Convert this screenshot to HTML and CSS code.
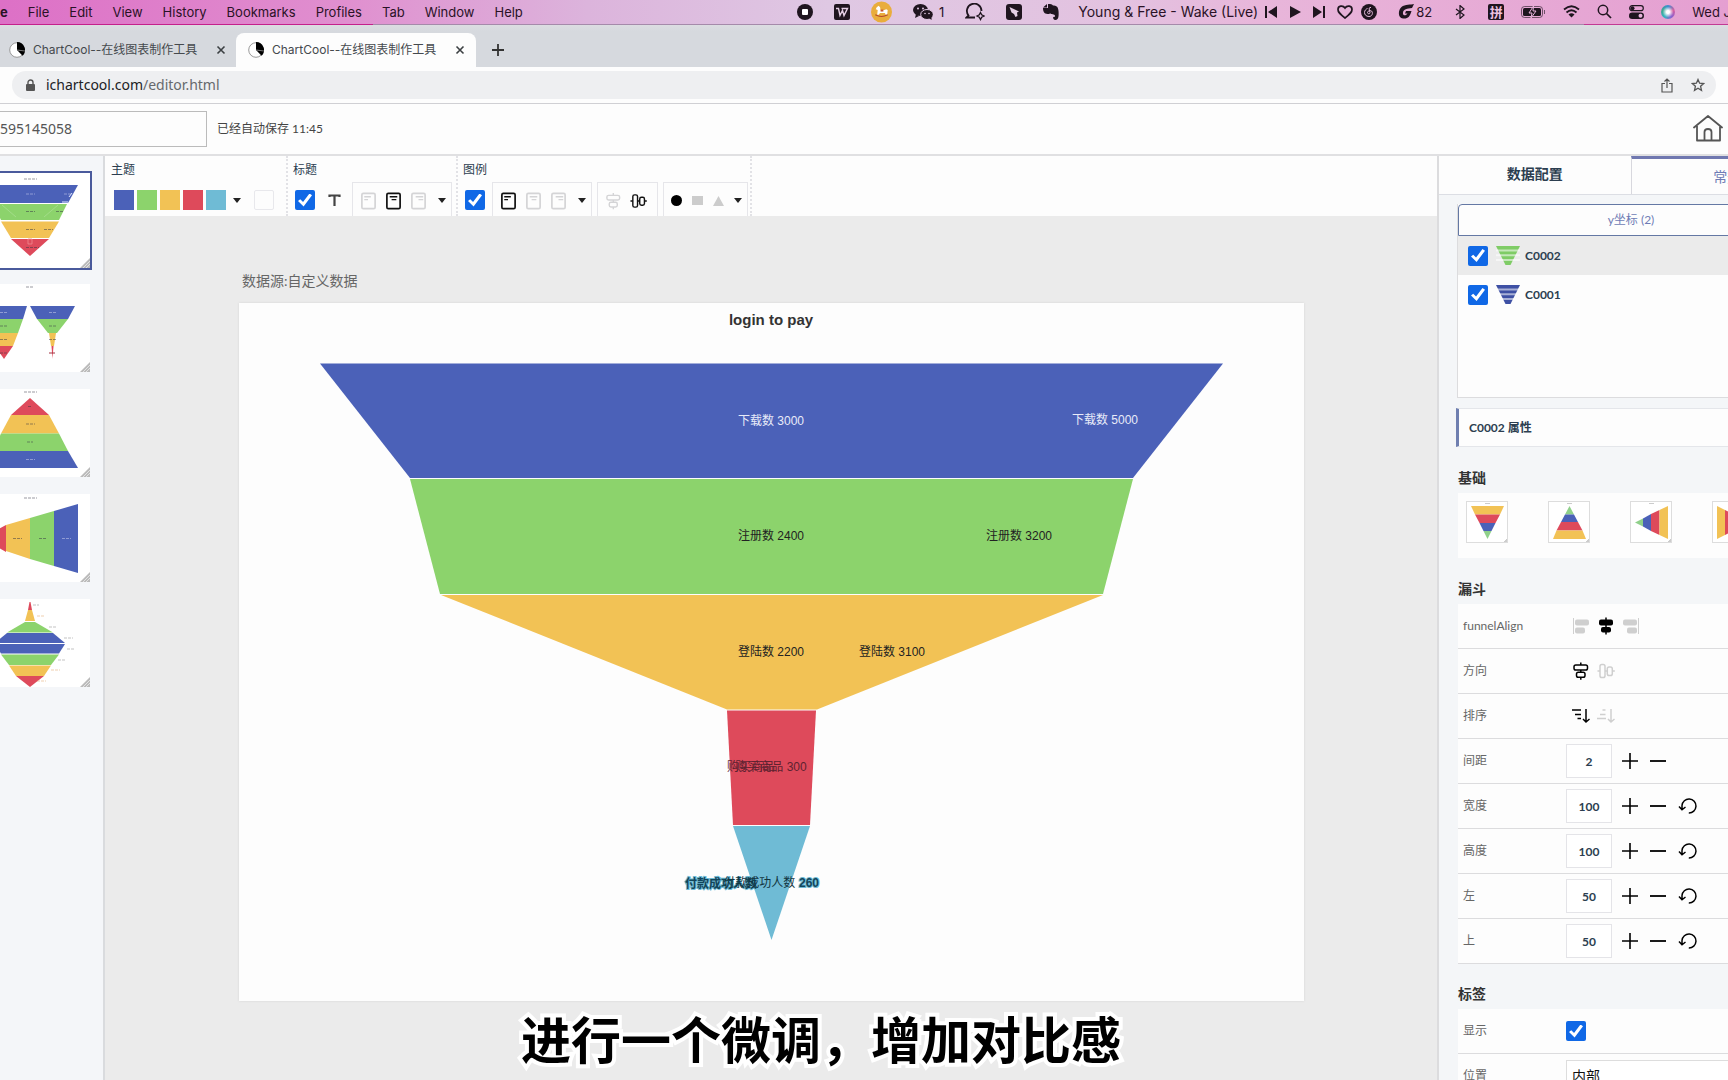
FILE: index.html
```html
<!DOCTYPE html>
<html lang="zh-CN">
<head>
<meta charset="utf-8">
<title>ChartCool--在线图表制作工具</title>
<link rel="stylesheet" href="styles.css">
</head>
<body>
<svg class="defs" aria-hidden="true">
  <symbol id="i-pie" viewBox="0 0 16 16"><circle cx="8" cy="8" r="7.3" fill="#fff" stroke="#999" stroke-width="1"/><path d="M8 0a8 8 0 0 1 5.600 13.700L8 8z" fill="#000"/><path d="M8 8l8 1" stroke="#777"/></symbol>
  <symbol id="i-close" viewBox="0 0 10 10"><path d="M1.500 1.500l7 7M8.500 1.500l-7 7" stroke="#3c4043" stroke-width="1.600"/></symbol>
  <symbol id="i-pos-l" viewBox="0 0 18 20"><rect x="2" y="2" width="14" height="16" rx="1.500" fill="none" stroke="currentColor" stroke-width="1.800"/><path d="M4.500 5.500h7M4.500 8.500h4" stroke="currentColor" stroke-width="1.400"/></symbol>
  <symbol id="i-pos-c" viewBox="0 0 18 20"><rect x="2" y="2" width="14" height="16" rx="1.500" fill="none" stroke="currentColor" stroke-width="1.800"/><path d="M5 5.500h8M7 8.500h5" stroke="currentColor" stroke-width="1.400"/></symbol>
  <symbol id="i-pos-r" viewBox="0 0 18 20"><rect x="2" y="2" width="14" height="16" rx="1.500" fill="none" stroke="currentColor" stroke-width="1.800"/><path d="M6 5.500h8M9 8.500h5" stroke="currentColor" stroke-width="1.400"/></symbol>
  <symbol id="i-vert" viewBox="0 0 18 18"><g fill="none" stroke="currentColor" stroke-width="1.500"><rect x="2" y="3" width="13.500" height="5" rx="1.800"/><rect x="4.500" y="10.300" width="8.500" height="5" rx="1.800"/><path d="M8.800 0.500v2.500M8.800 8v2.300M8.800 15.300v2.500"/></g></symbol>
  <symbol id="i-horz" viewBox="0 0 18 18"><g fill="none" stroke="currentColor" stroke-width="1.500"><rect x="3" y="2.500" width="5" height="13" rx="1.800"/><rect x="10.300" y="5" width="5" height="8.500" rx="1.800"/><path d="M0.500 9h2.500M8 9h2.300M15.300 9h2.500"/></g></symbol>
  <symbol id="i-al-l" viewBox="0 0 18 18"><path d="M1.500 1v16" stroke="currentColor"/><rect x="3" y="2.500" width="14" height="6" rx="2" fill="currentColor"/><rect x="3" y="10.500" width="10" height="6" rx="2" fill="currentColor"/></symbol>
  <symbol id="i-al-c" viewBox="0 0 18 18"><path d="M9 0.500v17" stroke="currentColor" stroke-width="1.500"/><rect x="2" y="2.500" width="14" height="6" rx="2" fill="currentColor"/><rect x="4" y="10" width="10" height="5.500" rx="2" fill="currentColor"/></symbol>
  <symbol id="i-al-r" viewBox="0 0 18 18"><path d="M16.500 1v16" stroke="currentColor"/><rect x="1" y="2.500" width="14" height="6" rx="2" fill="currentColor"/><rect x="5" y="10.500" width="10" height="6" rx="2" fill="currentColor"/></symbol>
  <symbol id="i-desc" viewBox="0 0 18 18"><path d="M0 3h9M3 7.500h6M5.500 11.500h3.500M14 2v13M11 12l3 3 3.500-3" fill="none" stroke="currentColor" stroke-width="1.500"/></symbol>
  <symbol id="i-asc" viewBox="0 0 18 18"><path d="M5.500 3h3M3 7.500h5.500M0 11.500h9M14 2v13M11 12l3 3 3.500-3" fill="none" stroke="currentColor" stroke-width="1.500"/></symbol>
  <symbol id="i-plus" viewBox="0 0 16 16"><path d="M0 8h16M8 0v16" stroke="currentColor" stroke-width="1.600"/></symbol>
  <symbol id="i-minus" viewBox="0 0 16 16"><path d="M0 8h16" stroke="currentColor" stroke-width="1.800"/></symbol>
  <symbol id="i-reset" viewBox="0 0 20 18"><path d="M4 12V8.500a7 7 0 1 1 6.800 7.500M1 9.500l3 3.300 3.500-2.800" fill="none" stroke="currentColor" stroke-width="1.500"/></symbol>
  <symbol id="i-funnel" viewBox="0 0 24 20"><path d="M0 0h24L14.500 19h-5z" fill="currentColor"/><path d="M0 4.500h24M0 9.300h24M0 14h24" stroke="#fff" stroke-opacity=".55" stroke-width="2"/></symbol>
  <symbol id="i-grip" viewBox="0 0 10 10"><path d="M10 0v10H0z" fill="#bbb"/><path d="M10 3l-7 7M10 6l-4 4" stroke="#eee" stroke-width=".8"/></symbol>
</svg>

<header class="menubar">
  <nav class="menus"><b>e</b><span>File</span><span>Edit</span><span>View</span><span>History</span><span>Bookmarks</span><span>Profiles</span><span>Tab</span><span>Window</span><span>Help</span></nav>
  <div class="tray">
    <svg width="16" height="16" viewBox="0 0 16 16"><circle cx="8" cy="8" r="8" fill="#1f151f"/><rect x="5" y="5" width="6" height="6" rx="1" fill="#fff"/></svg>
    <svg width="16" height="16" viewBox="0 0 16 16"><rect width="16" height="16" rx="2" fill="#1f151f"/><path d="M2 4.500h2.500l1.500 7 2.500-5 1.500 5 3.500-7h-6" fill="none" stroke="#e5cfe5" stroke-width="1.400"/></svg>
    <svg width="21" height="22" viewBox="0 0 22 22"><circle cx="11" cy="11" r="11" fill="#e9ad3c"/><path d="M5 8l1-2 2-1.500 1.500 1.500.5 3h4l2-1 1.500 1-.5 5h-1.500l-1-2H9.500l-1.500 2H6.500l.5-5z" fill="#fff"/><path d="M4.500 14q6.500 3.500 13 0" fill="none" stroke="#b5472a" stroke-width="1.200"/><path d="M10 8.500h3v2h-3z" fill="#c7552f"/></svg>
    <span class="pair"><svg width="20" height="16" viewBox="0 0 20 16"><ellipse cx="7.500" cy="6" rx="7.500" ry="6" fill="#1f151f"/><path d="M3 10l-1 4 4-2z" fill="#1f151f"/><ellipse cx="14" cy="10.500" rx="6.300" ry="5" fill="#1f151f" stroke="#dfc6e2"/><path d="M16 14l2.500 2v-3z" fill="#1f151f"/><g fill="#dfc6e2"><circle cx="5" cy="4.500" r="1"/><circle cx="10" cy="4.500" r="1"/><circle cx="12" cy="9.500" r=".8"/><circle cx="16" cy="9.500" r=".8"/></g></svg><span>1</span></span>
    <svg width="20" height="18" viewBox="0 0 20 18"><path d="M16.500 8A7.300 7.300 0 1 0 3.500 12.500L1.500 14.500H10" fill="none" stroke="#1f151f" stroke-width="1.800"/><path d="M15.500 9.500l1.200 2.300 2.300 1.200-2.300 1.200-1.200 2.300-1.200-2.300-2.300-1.200 2.300-1.200z" fill="none" stroke="#1f151f" stroke-width="1.300"/></svg>
    <svg width="16" height="16" viewBox="0 0 16 16"><rect width="16" height="16" rx="3" fill="#1f151f"/><path d="M3.500 3l9.500 4.500-2 1 .5 3.500-2 1-1.500-3-2.500-1.500z" fill="#e5cfe5"/></svg>
    <svg width="16" height="16" viewBox="0 0 16 16"><path d="M5 0v4H0C0 9 2 10 6 10c1 0 1-1 1-1 .5 2 5 .500 5 3 0 1.500-2 1.500-2 .500 0 2 .5 3.500 2.500 3.500 3 0 3.500-4 3-9S13 1.500 10 1.500C9 0 8 0 5 0zM4 0L0 3.500h4z" fill="#1f151f"/></svg>
    <div class="media">
      <span class="song">Young &amp; Free - Wake (Live)</span>
      <svg width="12" height="12" viewBox="0 0 12 12"><path d="M0 0h2v12H0zM12 0v12L3 6z" fill="#1f151f"/></svg>
      <svg width="12" height="12" viewBox="0 0 12 12"><path d="M1 0l11 6-11 6z" fill="#1f151f"/></svg>
      <svg width="12" height="12" viewBox="0 0 12 12"><path d="M10 0h2v12h-2zM0 0l9 6-9 6z" fill="#1f151f"/></svg>
      <svg width="16" height="14" viewBox="0 0 16 14"><path d="M8 13C3 9 1 7.500 1 4.500c0-4 5-4.500 7-1.500 2-3 7-2.500 7 1.500C15 7.500 13 9 8 13z" fill="none" stroke="#1f151f" stroke-width="1.700"/></svg>
      <svg width="16" height="16" viewBox="0 0 16 16"><circle cx="8" cy="8" r="8" fill="#1f151f"/><path d="M10 3.500c-2-.5-2 1-1.500 3l.5 2c0 2-2.500 1.500-2.500 0S9 6 10.500 7c2 2 .5 5.500-2.500 5.500S3.500 10.500 3.500 8.500 5 5 6.500 4.500" fill="none" stroke="#e5bcdc"/></svg>
    </div>
    <div class="status">
      <span class="pair tight"><svg width="16" height="15" viewBox="0 0 16 15"><path d="M16 0C13 1 7 0 3.500 3S-.500 14 5 14.500c5 .5 7-2 8.500-7.500H8L7 9.500h2.500C8 12 4.500 12 5 8.500S9 4.500 14 4z" fill="#1f151f"/></svg><span>82</span></span>
      <svg width="22" height="14" viewBox="0 0 22 14"><path d="M7 4l8 6-4 3.500V.500L15 4l-8 6" fill="none" stroke="#1f151f" stroke-width="1.200"/></svg>
      <span class="ime">拼</span>
      <svg width="25" height="12" viewBox="0 0 25 12"><rect x=".5" y=".5" width="21" height="11" rx="3" fill="none" stroke="#1f151f" stroke-opacity=".6"/><rect x="2" y="2" width="18" height="8" rx="1.500" fill="#1f151f"/><path d="M12.500 0L8 7h3l-1 5 5-7h-3z" fill="#1f151f" stroke="#e8b4dc"/><path d="M23.500 4v4" stroke="#1f151f" stroke-opacity=".6"/></svg>
      <svg width="17" height="13" viewBox="0 0 17 13"><g fill="none" stroke="#1f151f"><path d="M1 4.500Q8.500-2 16 4.500" stroke-width="1.800"/><path d="M3.500 7.500Q8.500 3 13.500 7.500" stroke-width="1.800"/></g><path d="M5.500 9.500Q8.500 7 11.500 9.500L8.500 12.500z" fill="#1f151f"/></svg>
      <svg width="15" height="15" viewBox="0 0 15 15"><circle cx="6" cy="6" r="4.700" fill="none" stroke="#1f151f" stroke-width="1.500"/><path d="M9.500 9.500l4.500 4.500" stroke="#1f151f" stroke-width="1.700"/></svg>
      <svg width="15" height="14" viewBox="0 0 15 14"><rect x=".7" y=".7" width="13.600" height="5" rx="2.500" fill="none" stroke="#1f151f" stroke-width="1.200"/><circle cx="3.500" cy="3.200" r="2" fill="#1f151f"/><rect y="7.500" width="15" height="6.500" rx="3.200" fill="#1f151f"/><circle cx="11.500" cy="10.700" r="2" fill="#e8b4dc"/></svg>
      <span class="siri"></span>
      <span>Wed Jun</span>
    </div>
  </div>
</header>

<div class="tabs">
  <div class="tab"><svg width="16" height="16"><use href="#i-pie"/></svg><span>ChartCool--在线图表制作工具</span><button aria-label="关闭"><svg width="10" height="10"><use href="#i-close"/></svg></button></div>
  <div class="tab active"><svg width="16" height="16"><use href="#i-pie"/></svg><span>ChartCool--在线图表制作工具</span><button aria-label="关闭"><svg width="10" height="10"><use href="#i-close"/></svg></button></div>
  <button class="newtab" aria-label="新标签页"><svg width="12" height="12" viewBox="0 0 12 12"><path d="M0 6h12M6 0v12" stroke="#333" stroke-width="1.800"/></svg></button>
</div>
<div class="address">
  <div class="pill">
    <svg width="10" height="13" viewBox="0 0 10 13"><rect y="5" width="9" height="7" rx="1" fill="#555"/><path d="M2 5V3.500a2.500 2.500 0 0 1 5 0V5" fill="none" stroke="#555" stroke-width="1.400"/></svg>
    <span class="url">ichartcool.com<i>/editor.html</i></span>
    <svg width="12" height="15" viewBox="0 0 12 15"><path d="M4 5.500H1v8.500h10V5.500H8M6 10V1.500M3.500 3.500L6 1l2.500 2.500" fill="none" stroke="#555" stroke-width="1.200"/></svg>
    <svg width="14" height="14" viewBox="0 0 14 14"><path d="M7 1.500l1.600 3.700 4 .4-3 2.700.9 4L7 10.200l-3.500 2.100.9-4-3-2.700 4-.4z" fill="none" stroke="#555" stroke-width="1.300"/></svg>
  </div>
</div>

<div class="apphead">
  <input class="docname" type="text" value="595145058" aria-label="名称">
  <span class="saved">已经自动保存 11:45</span>
  <a class="home" href="#" aria-label="首页"><svg width="30" height="28" viewBox="0 0 30 28"><path d="M1 12.500L15 1l14 11.500M4 11v14.500h23V11M11.500 25V17q0-3 3.500-3t3.500 3v8" fill="none" stroke="#555" stroke-width="1.800" stroke-linejoin="round" stroke-linecap="round"/></svg></a>
</div>

<div class="work">
  <ul class="sheets">
    <li class="on"><svg viewBox="-30 173 120 95" width="120" height="95">
      <path d="M-18 185H78L68 203H-8z" fill="#4b61b8"/><path d="M-7 204H67L59 220H1z" fill="#8cd36c"/><path d="M1 221.500H59L49 238H11z" fill="#f2c255"/><path d="M11 239H49L30 256z" fill="#de4a5b"/>
      <g stroke="#334" stroke-opacity=".5" stroke-dasharray="3 1"><path d="M24 179h13"/><path d="M26 211.500h9M56 211.500h7M26 229.500h9M44 229.500h9M26 247.500h13"/></g><path d="M26 194h9M64 194h7" stroke="#8f9bd4" stroke-dasharray="3 1"/><path d="M69 197l3-4M62 202h6" stroke="#dfe6ff"/><path d="M2 205l14 12M58 205l-14 12" stroke="#a8de90" stroke-width=".8"/><path d="M28 239h4v5h-4z" fill="none" stroke="#f08a90" stroke-width=".8"/>
    </svg><svg class="grip" width="10" height="10"><use href="#i-grip"/></svg></li>
    <li><svg viewBox="-30 284 120 88" width="120" height="88">
      <path d="M-18 306H27L23 319H-14z" fill="#4b61b8"/><path d="M-14 319H23L18 333H-10z" fill="#8cd36c"/><path d="M-10 333H18L13 346H-5z" fill="#f2c255"/><path d="M-5 346H13L4 359z" fill="#de4a5b"/>
      <path d="M30 306H75L68 319H37z" fill="#4b61b8"/><path d="M37 319H68L57 333H48z" fill="#8cd36c"/><path d="M49 333H56L54 346H51z" fill="#f2c255"/><path d="M51.500 346H53.500L52.500 359z" fill="#de4a5b"/>
      <g stroke="#334" stroke-opacity=".5" stroke-dasharray="3 1"><path d="M26 287h8M0 326h8M49 326h8M0 339.500h8M49 339.500h8M0 353h8"/></g><path d="M49 353h6" stroke="#a03040"/><path d="M0 312.500h8M49 312.500h8" stroke="#8f9bd4" stroke-dasharray="3 1"/>
    </svg><svg class="grip" width="10" height="10"><use href="#i-grip"/></svg></li>
    <li><svg viewBox="-30 389 120 88" width="120" height="88">
      <path d="M30 398L49 415H11z" fill="#de4a5b"/><path d="M11 415H49L59 433.500H1z" fill="#f2c255"/><path d="M1 433.500H59L68 451H-8z" fill="#8cd36c"/><path d="M-8 451H68L78 468H-18z" fill="#4b61b8"/>
      <path d="M24 392h13M28 406.500h4M26 424h9M27 442h6" stroke="#334" stroke-opacity=".5" stroke-dasharray="3 1"/><path d="M26 459.500h9" stroke="#8f9bd4" stroke-dasharray="3 1"/>
    </svg><svg class="grip" width="10" height="10"><use href="#i-grip"/></svg></li>
    <li><svg viewBox="-30 494 120 88" width="120" height="88">
      <path d="M-18 538L6 525V552z" fill="#de4a5b"/><path d="M6 525L30 518V559L6 551z" fill="#f2c255"/><path d="M30 518L54 511V566L30 559z" fill="#8cd36c"/><path d="M54 511L78 504V573L54 566z" fill="#4b61b8"/>
      <path d="M24 498h13M13 538.500h9M39 538.500h7" stroke="#334" stroke-opacity=".5" stroke-dasharray="3 1"/><path d="M62 538.500h9" stroke="#8f9bd4" stroke-dasharray="3 1"/>
    </svg><svg class="grip" width="10" height="10"><use href="#i-grip"/></svg></li>
    <li><svg viewBox="-30 599 120 88" width="120" height="88">
      <path d="M29.500 602H30.500L32 610H28z" fill="#de4a5b"/><path d="M28 610H32L35 621H25z" fill="#f2c255"/><path d="M25 622H35L53 632.500H7z" fill="#8cd36c"/><path d="M7 633H53L65 643H-5z" fill="#4b61b8"/><path d="M-5 644H65L59 653.500H1z" fill="#4b61b8"/><path d="M1 654.500H59L51 665H9z" fill="#8cd36c"/><path d="M9 665.500H51L44 676H16z" fill="#f2c255"/><path d="M16 676H44L30 687z" fill="#de4a5b"/>
      <g stroke-opacity=".5" stroke-dasharray="3 1" stroke="#888"><path d="M33 605h6M49 627h7M64 638h9M67 649h8M58 660h7"/><path d="M37 616h8M51 670h9M37 681h9" stroke="#e0a060"/></g>
    </svg><svg class="grip" width="10" height="10"><use href="#i-grip"/></svg></li>
  </ul>

  <main class="stage">
    <div class="toolbar">
      <section class="group g-theme"><h2>主题</h2>
        <div class="tools"><span class="sw blue"></span><span class="sw green"></span><span class="sw yellow"></span><span class="sw red"></span><span class="sw teal"></span><button class="caret" aria-label="更多主题"></button><span class="sw blank"></span></div>
      </section>
      <section class="group g-title"><h2>标题</h2>
        <div class="tools"><input type="checkbox" checked aria-label="显示标题"><button class="tee" aria-label="文字"><svg width="14" height="14" viewBox="0 0 14 14"><path d="M2.500 4V2.500h10V4M7.500 2.500V13" fill="none" stroke="#444" stroke-width="2.200"/></svg></button>
        <div class="box"><button aria-label="左"><svg width="17" height="20"><use href="#i-pos-l"/></svg></button><button class="sel" aria-label="中"><svg width="17" height="20"><use href="#i-pos-c"/></svg></button><button aria-label="右"><svg width="17" height="20"><use href="#i-pos-r"/></svg></button><button class="caret" aria-label="更多"></button></div></div>
      </section>
      <section class="group g-legend"><h2>图例</h2>
        <div class="tools"><input type="checkbox" checked aria-label="显示图例">
        <div class="box"><button class="sel" aria-label="左"><svg width="17" height="20"><use href="#i-pos-l"/></svg></button><button aria-label="中"><svg width="17" height="20"><use href="#i-pos-c"/></svg></button><button aria-label="右"><svg width="17" height="20"><use href="#i-pos-r"/></svg></button><button class="caret" aria-label="更多"></button></div>
        <div class="box orient"><button aria-label="纵向"><svg width="17" height="18"><use href="#i-vert"/></svg></button><button class="sel" aria-label="横向"><svg width="17" height="18"><use href="#i-horz"/></svg></button></div>
        <div class="box shapes"><button aria-label="圆形"><svg width="11" height="11" viewBox="0 0 11 11"><circle cx="5.500" cy="5.500" r="5.500"/></svg></button><button aria-label="方形"><svg width="11" height="11" viewBox="0 0 11 11"><rect y="1" width="11" height="9" fill="#ccc"/></svg></button><button aria-label="三角形"><svg width="11" height="11" viewBox="0 0 11 11"><path d="M5.500 1L11 11H0z" fill="#ccc"/></svg></button><button class="caret" aria-label="更多"></button></div></div>
      </section>
    </div>
    <div class="canvaswrap">
      <p class="source">数据源:自定义数据</p>
      <svg class="chart" viewBox="239 303 1065 698" role="img" aria-label="login to pay">
        <path d="M320 363.500H1223L1133 478H410z" fill="#4b61b8"/>
        <path d="M410 479H1133L1103 594H440z" fill="#8cd36c"/>
        <path d="M441 595H1103L817 709.500H727z" fill="#f2c255"/>
        <path d="M727 710.500H816L810 825H733z" fill="#de4a5b"/>
        <path d="M733 826H810L771.500 940z" fill="#6fbbd5"/>
        <g class="lb">
          <text class="title" x="771" y="325">login to pay</text>
          <text class="lt" x="771" y="425">下载数 3000</text><text class="lt" x="1105" y="424">下载数 5000</text>
          <text x="771" y="540">注册数 2400</text><text x="1019" y="540">注册数 3200</text>
          <text x="771" y="656">登陆数 2200</text><text x="892" y="656">登陆数 3100</text>
          <text class="onred" x="751" y="771">购买商品</text><text class="onred" x="771" y="771">购买商品 300</text>
          <text class="teal" x="721" y="888">付款成功人数</text><text class="dark" x="771" y="887">付款成功人数 260</text><text class="teal num" x="809" y="887">260</text>
        </g>
      </svg>
    </div>
  </main>

  <aside class="panel"><div class="inner">
    <div class="ptabs"><button>数据配置</button><button class="on">常规</button></div>
    <div class="series">
      <button class="axis">y坐标 (2)</button>
      <div class="list">
        <label class="on"><input type="checkbox" checked><svg width="24" height="20" class="fg"><use href="#i-funnel"/></svg>C0002</label>
        <label><input type="checkbox" checked><svg width="24" height="20" class="fb"><use href="#i-funnel"/></svg>C0001</label>
      </div>
    </div>
    <div class="prop">C0002 属性</div>
    <h3>基础</h3>
    <div class="kinds">
      <button aria-label="漏斗"><svg width="40" height="40" viewBox="0 0 40 40"><path d="M4 4H37L33 12.500H8z" fill="#f2c255"/><path d="M8 12.500H33L28.500 21H12.500z" fill="#de4a5b"/><path d="M12.500 21H28.500L24.500 29H16.500z" fill="#4b61b8"/><path d="M16.500 29H24.500L20.500 37z" fill="#8fd08a"/><path d="M18 1.500h5M40 40v-3l-3 3z" stroke="#ccc" fill="#ccc"/></svg></button>
      <button aria-label="金字塔"><svg width="40" height="40" viewBox="0 0 40 40"><path d="M20.500 4L25 12.500H16z" fill="#8fd08a"/><path d="M16 12.500H25L29 20H12z" fill="#4b61b8"/><path d="M12 20H29L33.500 28.500H7.500z" fill="#de4a5b"/><path d="M7.500 28.500H33.500L37 37H4z" fill="#f2c255"/><path d="M18 1.500h5M40 40v-3l-3 3z" stroke="#ccc" fill="#ccc"/></svg></button>
      <button aria-label="左向漏斗"><svg width="40" height="40" viewBox="0 0 40 40"><path d="M4 20.500L12 16.500V24.500z" fill="#8fd08a"/><path d="M12 16.500L20 12V29L12 24.500z" fill="#4b61b8"/><path d="M20 12L28.500 8V33L20 29z" fill="#de4a5b"/><path d="M28.500 8L37 4V37L28.500 33z" fill="#f2c255"/><path d="M18 1.500h5M40 40v-3l-3 3z" stroke="#ccc" fill="#ccc"/></svg></button>
      <button aria-label="右向漏斗"><svg width="40" height="40" viewBox="0 0 40 40"><path d="M36 20.500L28 16.500V24.500z" fill="#8fd08a"/><path d="M28 16.500L20 12V29L28 24.500z" fill="#4b61b8"/><path d="M20 12L12 8V33L20 29z" fill="#de4a5b"/><path d="M12 8L4 4V37L12 33z" fill="#f2c255"/></svg></button>
    </div>
    <h3>漏斗</h3>
    <div class="rows">
      <div class="row"><span>funnelAlign</span><div class="icons"><button aria-label="左对齐"><svg width="18" height="18"><use href="#i-al-l"/></svg></button><button class="sel" aria-label="居中"><svg width="18" height="18"><use href="#i-al-c"/></svg></button><button aria-label="右对齐"><svg width="18" height="18"><use href="#i-al-r"/></svg></button></div></div>
      <div class="row"><span>方向</span><div class="icons"><button class="sel" aria-label="纵向"><svg width="18" height="18"><use href="#i-vert"/></svg></button><button aria-label="横向"><svg width="18" height="18"><use href="#i-horz"/></svg></button></div></div>
      <div class="row"><span>排序</span><div class="icons"><button class="sel" aria-label="降序"><svg width="18" height="18"><use href="#i-desc"/></svg></button><button aria-label="升序"><svg width="18" height="18"><use href="#i-asc"/></svg></button></div></div>
      <div class="row"><label for="gap">间距</label><input id="gap" type="text" value="2"><div class="steps"><button aria-label="加"><svg width="16" height="16"><use href="#i-plus"/></svg></button><button aria-label="减"><svg width="16" height="16"><use href="#i-minus"/></svg></button></div></div>
      <div class="row"><label for="w">宽度</label><input id="w" type="text" value="100"><div class="steps"><button aria-label="加"><svg width="16" height="16"><use href="#i-plus"/></svg></button><button aria-label="减"><svg width="16" height="16"><use href="#i-minus"/></svg></button><button aria-label="重置"><svg width="20" height="18"><use href="#i-reset"/></svg></button></div></div>
      <div class="row"><label for="h">高度</label><input id="h" type="text" value="100"><div class="steps"><button aria-label="加"><svg width="16" height="16"><use href="#i-plus"/></svg></button><button aria-label="减"><svg width="16" height="16"><use href="#i-minus"/></svg></button><button aria-label="重置"><svg width="20" height="18"><use href="#i-reset"/></svg></button></div></div>
      <div class="row"><label for="l">左</label><input id="l" type="text" value="50"><div class="steps"><button aria-label="加"><svg width="16" height="16"><use href="#i-plus"/></svg></button><button aria-label="减"><svg width="16" height="16"><use href="#i-minus"/></svg></button><button aria-label="重置"><svg width="20" height="18"><use href="#i-reset"/></svg></button></div></div>
      <div class="row"><label for="t">上</label><input id="t" type="text" value="50"><div class="steps"><button aria-label="加"><svg width="16" height="16"><use href="#i-plus"/></svg></button><button aria-label="减"><svg width="16" height="16"><use href="#i-minus"/></svg></button><button aria-label="重置"><svg width="20" height="18"><use href="#i-reset"/></svg></button></div></div>
    </div>
    <h3>标签</h3>
    <div class="rows">
      <div class="row"><label for="show">显示</label><input id="show" type="checkbox" checked></div>
      <div class="row"><label for="pos">位置</label><select id="pos"><option>内部</option></select></div>
    </div>
  </div></aside>
</div>
<p class="subtitle">进行一个微调，增加对比感</p>
</body>
</html>
```
FILE: styles.css
```css
* { box-sizing: border-box; }
body {
  margin: 0;
  height: 100vh;
  display: flex;
  flex-direction: column;
  overflow: hidden;
  position: relative;
  background: #fdfdfd;
  font: 12px/16px Lato, "Noto Sans CJK SC", sans-serif;
  color: #2c3e50;
}
h2, h3, p, ul { margin: 0; padding: 0; }
button { border: 0; padding: 0; background: none; font: inherit; color: inherit; display: flex; align-items: center; justify-content: center; }
svg { flex: none; display: block; }
.defs { position: absolute; width: 0; height: 0; }

/* system menu bar */
.menubar {
  flex: none;
  height: 25px;
  padding-bottom: 2px;
  display: flex;
  align-items: center;
  overflow: hidden;
  white-space: nowrap;
  font: 13px/22px Inter, "Noto Sans CJK SC", sans-serif;
  color: #2a1226;
  background:
    linear-gradient(90deg, #c4208c 0 373px, #a58aaa 373px 1584px, #c23a94 1584px) bottom / 100% 1px no-repeat,
    linear-gradient(90deg, #dd70c6, #e08fcf 20%, #dcb4dc 34%, #dfc8e3 48%, #e3c2e0 65%, #e8b6da 73%, #e59fd1 100%);
}
.menus { flex: 0 0 797px; display: flex; gap: 20px; }
.tray { display: flex; align-items: center; gap: 21px; }
.pair { display: flex; align-items: center; gap: 6px; }
.tight { gap: 2px; }
.media { display: flex; align-items: center; gap: 12px; }
.song { font-size: 14px; margin: 0 -5px 0 -2px; }
.media svg:last-child { margin-left: -4px; }
.status { display: flex; align-items: center; gap: 17px; }
.ime { width: 16px; height: 16px; border-radius: 2px; background: #1f151f; color: #edc0e0; font: bold 13px/16px "Noto Sans CJK SC", sans-serif; text-align: center; }
.siri { width: 14px; height: 14px; border-radius: 50%; background: radial-gradient(circle, #fff 15%, transparent 55%), conic-gradient(#3b8fd0, #d860a0, #8a60d0, #35b5c0, #3fa890, #3b8fd0); }

/* browser chrome */
.tabs { flex: none; height: 42px; display: flex; align-items: flex-end; background: linear-gradient(#dcdde2, #d6d9de 6px); font: 12px/16px Inter, "Noto Sans CJK SC", sans-serif; color: #45494d; }
.tab { width: 240px; height: 34px; padding: 0 11px 0 12px; display: flex; align-items: center; gap: 8px; white-space: nowrap; }
.tab:first-child { width: 236px; padding-left: 9px; padding-right: 10px; }
.tab span { flex: 1; }
.tab.active { background: #fdfdfd; border-radius: 8px 8px 0 0; }
.newtab { width: 44px; height: 34px; }
.address { flex: none; height: 37px; padding: 4px 12px; border-bottom: 1px solid #d0d0d4; }
.pill { height: 28px; border-radius: 14px; background: #eeeff1; display: flex; align-items: center; padding: 0 11px 0 14px; }
.url { flex: 1; margin-left: 10px; font: 14px/20px "Noto Sans", sans-serif; color: #202124; }
.url i { font-style: normal; color: #66696d; }
.pill svg:last-child { margin-left: 18px; }

/* editor header */
.apphead { flex: none; height: 52px; display: flex; align-items: center; padding-right: 5px; border-bottom: 2px solid #e0e0e2; }
.docname { width: 208px; height: 36px; margin-left: -1px; padding: 0 0 2px; border: 1px solid #bbb; background: transparent; font: 14px/20px "Noto Sans", sans-serif; color: #555; }
.saved { margin-left: 10px; font-size: 12px; color: #444; }
.home { margin-left: auto; }

.work { flex: 1; min-height: 0; display: flex; }

/* sheet thumbnails */
.sheets { flex: none; width: 105px; padding-top: 15px; overflow: hidden; list-style: none; background: #f4f6f9; border-right: 2px solid #d9dbde; }
.sheets li { position: relative; width: 120px; margin: 0 0 17px -30px; background: #fff; }
.sheets .on { width: 124px; margin: 0 0 14px -32px; border: 2px solid #4a5a9c; }
.grip { position: absolute; right: 0; bottom: 0; }

/* toolbar */
.stage { flex: 1; min-width: 0; background: #ebebeb; }
.toolbar { height: 60px; display: flex; background: #fdfdfd; overflow: hidden; }
.group { padding: 6px 4px 0 5px; border-right: 2px dotted #e2e2e6; }
.g-theme { width: 183px; padding-left: 6px; }
.g-title { width: 170px; }
.g-legend { width: 294px; }
.group h2 { font-size: 12px; line-height: 16px; font-weight: 400; }
.tools { display: flex; align-items: center; height: 34px; margin-top: 5px; gap: 5px; }
.g-theme .tools { gap: 3px; padding-left: 3px; }
.g-title .tools, .g-legend .tools { padding-left: 2px; }
.sw { width: 20px; height: 20px; }
.blue { background: #4b61b8; }
.green { background: #8cd36c; }
.yellow { background: #f2c255; }
.red { background: #de4a5b; }
.teal { background: #6fbbd5; }
.blank { margin-left: 6px; border: 1px solid #e8e8ec; border-radius: 2px; }
.caret { width: 16px; height: 20px; }
.caret::before { content: ""; border: 4px solid transparent; border-top: 5px solid #222; border-bottom: 0; }
.tee { width: 38px; height: 20px; }
input[type=checkbox] { appearance: none; flex: none; width: 20px; height: 20px; margin: 0; border-radius: 2px; background: #1068e6; display: grid; place-items: center; }
input[type=checkbox]::before { content: ""; width: 14px; height: 13px; background: #fff; clip-path: polygon(0 57%, 16% 44%, 36% 66%, 82% 0, 100% 13%, 40% 100%); }
.box { display: flex; align-items: center; gap: 8px; height: 36px; padding: 0 2px 0 7px; border: 1px solid #e6e6ea; border-bottom: 0; color: #d4d4d6; }
.g-legend .tools input { margin-right: 2px; }
.sel { color: #111; }
.box .caret { width: 14px; }
.orient { padding-right: 10px; }
.shapes { gap: 10px; }
.shapes .caret { width: 8px; margin-right: 3px; }

/* canvas */
.canvaswrap { padding: 55px 133px 0 134px; }
.source { padding-left: 3px; font-size: 14px; line-height: 20px; height: 32px; color: #666; }
.chart { width: 100%; height: auto; background: #fdfdfd; box-shadow: 0 0 2px #d4d4d4; }
.lb { font: 12px "Liberation Sans", "Noto Sans CJK SC", sans-serif; text-anchor: middle; fill: #222; }
.lb .title { font-size: 15px; font-weight: 700; fill: #333; }
.lb .lt { fill: #e8ebf8; }
.lb .onred { fill: #5e2230; }
.lb .teal { fill: #12455a; font-weight: 700; stroke: #6fbbd5; stroke-width: 2px; paint-order: stroke; }
.lb .dark { fill: #12353f; }

/* settings panel */
.panel { flex: none; width: 291px; overflow: hidden; border-left: 2px solid #dcdcde; background: #f4f6f8; }
.inner { width: 384px; }
.ptabs { display: flex; height: 39px; background: #fdfdfd; border-bottom: 1px solid #dcdee4; font-size: 14px; }
.ptabs button { flex: 1; padding-bottom: 3px; font-weight: 700; }
.ptabs .on { padding-bottom: 0; border-left: 1px solid #d8d8de; border-top: 3px solid #7078b0; color: #6f7cb5; font-weight: 400; }
.series { margin: 9px 18px 0; height: 194px; border: 1px solid #dcdcde; border-top: 0; background: #fdfdfd; }
.axis { width: 100%; height: 32px; border: 1px solid #6478a4; border-radius: 4px 4px 0 0; color: #6f7cb5; }
.list label { display: flex; align-items: center; height: 39px; padding-left: 10px; font-weight: 700; }
.list svg { margin: 0 5px 0 8px; }
.list .on { background: #ebebeb; }
.fg { color: #7fcc66; }
.fb { color: #3e50a4; }
.prop { margin: 10px 18px 0 17px; height: 39px; padding-left: 10px; border: 1px solid #e4e6ea; border-left: 3px solid #6f7fb0; background: #fdfdfd; font-weight: 700; line-height: 38px; }
h3 { padding: 21px 0 5px 19px; font-size: 14px; line-height: 20px; color: #333; }
.kinds { margin-left: 19px; height: 65px; padding: 8px; display: flex; gap: 40px; background: #fdfdfd; }
.kinds button { width: 42px; height: 42px; border: 1px solid #ddd; background: #fff; }
.rows { margin-left: 19px; }
.rows + h3 { padding-top: 20px; }
.row { display: flex; align-items: center; height: 45px; padding-left: 5px; background: #fdfdfd; border-bottom: 1px solid #dcdcde; color: #666; }
.row > :first-child { width: 103px; }
.row input[type=text] { width: 46px; height: 34px; padding: 0; border: 1px solid #e4e4e8; background: #fff; font: 700 12px/16px Lato, sans-serif; text-align: center; color: #2c3e50; }
.icons { display: flex; gap: 7px; padding-left: 6px; color: #cfcfcf; }
.icons .sel { color: #000; }
.steps { display: flex; gap: 12px; padding-left: 10px; color: #000; }
select { appearance: none; width: 230px; height: 32px; padding: 0 5px; border: 1px solid #ddd; background: #fff; font: 14px/20px Lato, "Noto Sans CJK SC", sans-serif; color: #111; }

/* caption over the page */
.subtitle { position: absolute; left: 521px; bottom: 7px; font: 700 50px/72px "Noto Sans CJK SC", sans-serif; color: #000; -webkit-text-stroke: 8px #fff; paint-order: stroke fill; white-space: nowrap; }
```
